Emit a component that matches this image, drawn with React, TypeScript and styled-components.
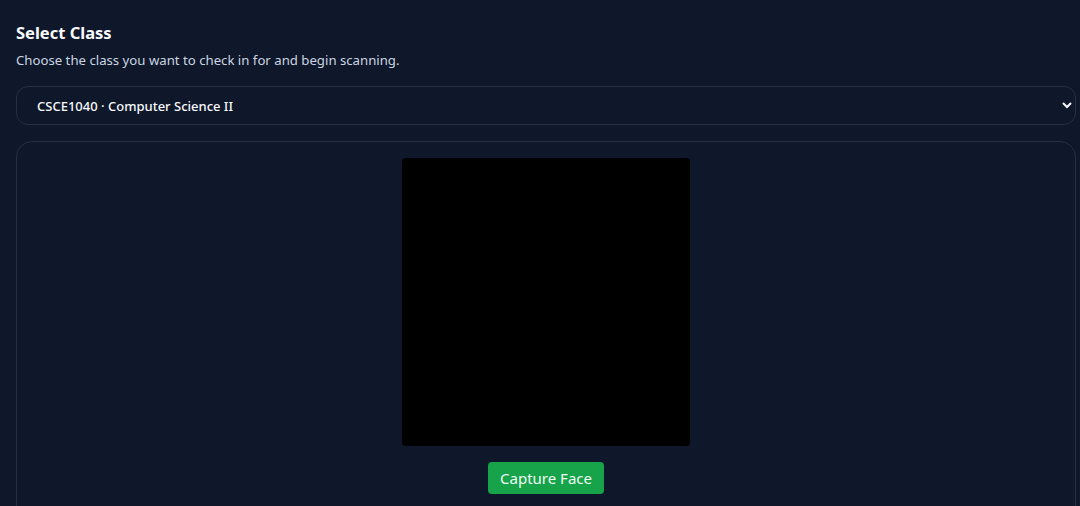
import React, { useState } from "react";
import styled, { createGlobalStyle } from "styled-components";

const GlobalStyle = createGlobalStyle`
  html, body {
    margin: 0;
    padding: 0;
    background: #0f172a;
    color: #f1f5f9;
    font-family: "Noto Sans", "Open Sans", sans-serif;
    overflow: hidden;
  }
`;

const Page = styled.div`
  display: flex;
  flex-direction: column;
  padding: 21px 4px 0 16px;
  height: 506px;
  box-sizing: border-box;
  & > * {
    flex-shrink: 0;
  }
`;

const Title = styled.h2`
  margin: 0;
  font-size: 16.5px;
  font-weight: 700;
  color: #f8fafc;
  line-height: 24px;
`;

const Subtitle = styled.p`
  margin: 6px 0 0;
  font-size: 13.2px;
  color: #cbd5e1;
  line-height: 18px;
`;

const ClassSelect = styled.select`
  margin-top: 17px;
  height: 39px;
  width: 100%;
  box-sizing: border-box;
  padding: 0 16px 0 16px;
  border: 1px solid #243044;
  border-radius: 12px;
  background: #0f172a;
  color: #f8fafc;
  color-scheme: dark;
  font-family: inherit;
  font-size: 13px;
  font-weight: 500;
  outline: none;
`;

const Panel = styled.section`
  margin-top: 16px;
  border: 1px solid #243044;
  border-radius: 16px;
  padding: 16px;
  display: flex;
  flex-direction: column;
  align-items: center;
  gap: 16px;
  height: 420px;
`;

const Video = styled.div`
  width: 288px;
  height: 288px;
  flex-shrink: 0;
  background: #000;
  border-radius: 4px;
`;

const CaptureButton = styled.button`
  height: 32px;
  padding: 0 12px;
  border: none;
  border-radius: 4px;
  background: #16a34a;
  color: #f0fdf4;
  font-family: inherit;
  font-size: 15px;
  cursor: pointer;
`;

const classes = [
  "CSCE1040 · Computer Science II",
  "CSCE1030 · Computer Science I",
  "CSCE2100 · Foundations of Computing",
];

export default function App() {
  const [selected, setSelected] = useState(classes[0]);
  return (
    <>
      <GlobalStyle />
      <Page>
        <Title>Select Class</Title>
        <Subtitle>Choose the class you want to check in for and begin scanning.</Subtitle>
        <ClassSelect value={selected} onChange={(e) => setSelected(e.target.value)}>
          {classes.map((c) => (
            <option key={c} value={c}>
              {c}
            </option>
          ))}
        </ClassSelect>
        <Panel>
          <Video />
          <CaptureButton>Capture Face</CaptureButton>
        </Panel>
      </Page>
    </>
  );
}
